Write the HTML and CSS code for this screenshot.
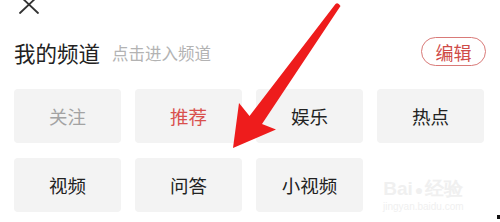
FILE: index.html
```html
<!DOCTYPE html>
<html lang="zh">
<head>
<meta charset="utf-8">
<link rel="stylesheet" href="styles.css">
</head>
<body>
<div class="page">
  <div class="topbar">
    <svg class="close" width="24" height="14" viewBox="0 0 24 14">
      <path d="M3 -4 L21 13 M21 -4 L3 13" stroke="#333" stroke-width="1.8" fill="none" stroke-linecap="round"/>
    </svg>
  </div>
  <div class="header">
    <div class="titles">
      <span class="title">我的频道</span>
      <span class="sub">点击进入频道</span>
    </div>
    <div class="edit">编辑</div>
  </div>
  <div class="grid">
    <div class="tile muted">关注</div>
    <div class="tile active">推荐</div>
    <div class="tile">娱乐</div>
    <div class="tile">热点</div>
    <div class="tile">视频</div>
    <div class="tile">问答</div>
    <div class="tile">小视频</div>
  </div>

  <div class="watermark">
    <div class="wm-main">Bai<span class="paw">●</span>经验</div>
    <div class="wm-url">jingyan.baidu.com</div>
  </div>
  <div class="dot"></div>

  <svg class="arrow" width="500" height="222" viewBox="0 0 500 222">
    <path d="M335.5 4 Q338 2 340.5 6 L262 124 L276 129.5 L233 148 L239 103 L249.5 116 Z" fill="#ee1c1c"/>
  </svg>
</div>
</body>
</html>
```
FILE: styles.css
```css
html, body {
  margin: 0;
  padding: 0;
  background: #fff;
}
body {
  font-family: "Noto Sans CJK SC", "Noto Sans", sans-serif;
  width: 500px;
  height: 222px;
  overflow: hidden;
}
.page {
  position: relative;
  width: 500px;
  height: 222px;
}
.topbar {
  height: 37px;
  padding-left: 17px;
}
.close {
  display: block;
}
.header {
  height: 29px;
  display: flex;
  align-items: center;
  justify-content: space-between;
  padding: 0 14px 0 14px;
}
.titles {
  display: flex;
  align-items: center;
  gap: 12px;
}
.title {
  font-size: 21.5px;
  line-height: 29px;
  color: #222;
  padding-top: 2px;
}
.sub {
  font-size: 16.5px;
  line-height: 29px;
  color: #b3b3b3;
  padding-top: 3px;
}
.edit {
  box-sizing: border-box;
  width: 65px;
  height: 29px;
  border: 1.5px solid #d97a78;
  border-radius: 15px;
  color: #cf4b48;
  font-size: 18px;
  display: flex;
  align-items: center;
  justify-content: center;
}
.grid {
  margin-top: 23px;
  padding: 0 15px 0 14px;
  display: grid;
  grid-template-columns: repeat(4, 107px);
  grid-auto-rows: 54px;
  column-gap: 14px;
  row-gap: 15px;
}
.tile {
  background: #f3f3f3;
  border-radius: 4px;
  display: flex;
  align-items: center;
  justify-content: center;
  font-size: 18.5px;
  color: #222;
}
.tile.muted {
  color: #a3a3a3;
}
.tile.active {
  color: #d9504d;
}
.arrow {
  position: absolute;
  left: 0;
  top: 0;
  pointer-events: none;
}
.watermark {
  position: absolute;
  left: 383px;
  top: 178px;
  color: #f0f0f0;
  font-family: "Liberation Sans", sans-serif;
  text-align: center;
}
.wm-main {
  font-size: 19px;
  line-height: 22px;
  font-weight: bold;
}
.paw {
  font-size: 14px;
  margin: 0 2px;
}
.wm-url {
  font-size: 10px;
  line-height: 11px;
}
.dot {
  position: absolute;
  left: 497px;
  top: 215px;
  width: 3px;
  height: 4px;
  background: #111;
}
```
